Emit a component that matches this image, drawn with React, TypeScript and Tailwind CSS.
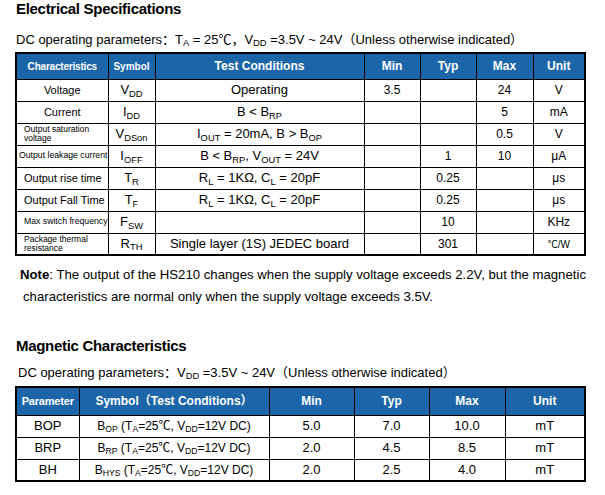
import React from 'react';

const font = { fontFamily: '"Liberation Sans", Arial, "Noto Sans CJK SC", sans-serif' };

function S({ children }: { children: React.ReactNode }) {
  return <sub className="text-[0.72em]">{children}</sub>;
}

const th = 'border border-black bg-[#1c65a8] text-white font-bold p-0 text-center align-middle';
const td = 'border border-black p-0 text-center align-middle h-[22px] text-[12px]';

type Row = {
  name: React.ReactNode;
  nameCls: string;
  sym: React.ReactNode;
  cond: React.ReactNode;
  min?: string;
  typ?: string;
  max?: string;
  unit: React.ReactNode;
};

const elec: Row[] = [
  { name: 'Voltage', nameCls: 'text-[11px] text-center', sym: <>V<S>DD</S></>, cond: 'Operating', min: '3.5', max: '24', unit: 'V' },
  { name: 'Current', nameCls: 'text-[11px] text-center', sym: <>I<S>DD</S></>, cond: <>B &lt; B<S>RP</S></>, max: '5', unit: 'mA' },
  {
    name: <>Output saturation<br />voltage</>,
    nameCls: 'text-[8.5px] leading-[9px] text-left pl-[7px]',
    sym: <>V<S>DSon</S></>,
    cond: <>I<S>OUT</S> = 20mA, B &gt; B<S>OP</S></>,
    max: '0.5',
    unit: 'V',
  },
  { name: 'Output leakage current', nameCls: 'text-[8.7px] text-left pl-[2px] whitespace-nowrap', sym: <>I<S>OFF</S></>, cond: <>B &lt; B<S>RP</S>, V<S>OUT</S> = 24V</>, typ: '1', max: '10', unit: 'μA' },
  { name: 'Output rise time', nameCls: 'text-[11px] text-left pl-[7px]', sym: <>T<S>R</S></>, cond: <>R<S>L</S> = 1KΩ, C<S>L</S> = 20pF</>, typ: '0.25', unit: 'μs' },
  { name: 'Output Fall Time', nameCls: 'text-[11px] text-left pl-[7px]', sym: <>T<S>F</S></>, cond: <>R<S>L</S> = 1KΩ, C<S>L</S> = 20pF</>, typ: '0.25', unit: 'μs' },
  { name: 'Max switch frequency', nameCls: 'text-[8.7px] text-left pl-[7px] whitespace-nowrap', sym: <>F<S>SW</S></>, cond: '', typ: '10', unit: 'KHz' },
  {
    name: <>Package thermal<br />resistance</>,
    nameCls: 'text-[8.5px] leading-[9px] text-left pl-[7px]',
    sym: <>R<S>TH</S></>,
    cond: 'Single layer (1S) JEDEC board',
    typ: '301',
    unit: <span className="text-[10px]">℃/W</span>,
  },
];

const mag = [
  { p: 'BOP', b: 'OP', min: '5.0', typ: '7.0', max: '10.0' },
  { p: 'BRP', b: 'RP', min: '2.0', typ: '4.5', max: '8.5' },
  { p: 'BH', b: 'HYS', min: '2.0', typ: '2.5', max: '4.0' },
];

export default function App() {
  return (
    <div className="w-[605px] h-[495px] bg-white text-black overflow-hidden" style={font}>
      {/* Electrical */}
      <h2 className="pl-[16px] text-[15px] font-bold leading-[18px] tracking-[-0.3px]">Electrical Specifications</h2>
      <p className="pl-[16px] mt-[12px] text-[13px] leading-[20px]">
        DC operating parameters：T<S>A</S> = 25℃，V<S>DD</S> =3.5V ~ 24V（Unless otherwise indicated）
      </p>
      <table className="ml-[15px] mt-[2px] w-[569px] table-fixed border-collapse border-2 border-black">
        <colgroup>
          <col className="w-[92px]" />
          <col className="w-[47px]" />
          <col className="w-[209px]" />
          <col className="w-[56px]" />
          <col className="w-[56px]" />
          <col className="w-[57px]" />
          <col className="w-[52px]" />
        </colgroup>
        <thead>
          <tr className="h-[26px]">
            <th className={`${th} text-[10px] tracking-[-0.2px]`}>Characteristics</th>
            <th className={`${th} text-[10px]`}>Symbol</th>
            <th className={`${th} text-[12px]`}>Test Conditions</th>
            <th className={`${th} text-[12px]`}>Min</th>
            <th className={`${th} text-[12px]`}>Typ</th>
            <th className={`${th} text-[12px]`}>Max</th>
            <th className={`${th} text-[12px]`}>Unit</th>
          </tr>
        </thead>
        <tbody>
          {elec.map((r, i) => (
            <tr key={i}>
              <td className={`border border-black p-0 align-middle h-[22px] ${r.nameCls}`}>{r.name}</td>
              <td className={`${td} text-[13px]`}>{r.sym}</td>
              <td className={`${td} text-[13px]`}>{r.cond}</td>
              <td className={td}>{r.min}</td>
              <td className={td}>{r.typ}</td>
              <td className={td}>{r.max}</td>
              <td className={td}>{r.unit}</td>
            </tr>
          ))}
        </tbody>
      </table>

      {/* Note */}
      <div className="mt-[8px] text-[13.2px] leading-[22px]">
        <p className="pl-[20px] whitespace-nowrap">
          <b>Note</b>: The output of the HS210 changes when the supply voltage exceeds 2.2V, but the magnetic
        </p>
        <p className="pl-[23px]">characteristics are normal only when the supply voltage exceeds 3.5V.</p>
      </div>

      {/* Magnetic */}
      <h2 className="pl-[16px] mt-[29px] text-[15px] font-bold leading-[18px] tracking-[-0.3px]">Magnetic Characteristics</h2>
      <p className="pl-[18px] mt-[8px] text-[13px] leading-[20px]">
        DC operating parameters：V<S>DD</S> =3.5V ~ 24V（Unless otherwise indicated）
      </p>
      <table className="ml-[15px] mt-[3px] w-[569px] table-fixed border-collapse border-2 border-black">
        <colgroup>
          <col className="w-[63px]" />
          <col className="w-[190px]" />
          <col className="w-[85px]" />
          <col className="w-[75px]" />
          <col className="w-[76px]" />
          <col className="w-[80px]" />
        </colgroup>
        <thead>
          <tr className="h-[28px]">
            <th className={`${th} text-[11px] tracking-[-0.2px]`}>Parameter</th>
            <th className={`${th} text-[12px]`}>Symbol（Test Conditions）</th>
            <th className={`${th} text-[12px]`}>Min</th>
            <th className={`${th} text-[12px]`}>Typ</th>
            <th className={`${th} text-[12px]`}>Max</th>
            <th className={`${th} text-[12px]`}>Unit</th>
          </tr>
        </thead>
        <tbody>
          {mag.map((r) => (
            <tr key={r.p}>
              <td className={`${td} text-[13px]`}>{r.p}</td>
              <td className={`${td} text-[12px] whitespace-nowrap`}>
                B<S>{r.b}</S> (T<S>A</S>=25℃, V<S>DD</S>=12V DC)
              </td>
              <td className={`${td} text-[13px]`}>{r.min}</td>
              <td className={`${td} text-[13px]`}>{r.typ}</td>
              <td className={`${td} text-[13px]`}>{r.max}</td>
              <td className={`${td} text-[13px]`}>mT</td>
            </tr>
          ))}
        </tbody>
      </table>
    </div>
  );
}
